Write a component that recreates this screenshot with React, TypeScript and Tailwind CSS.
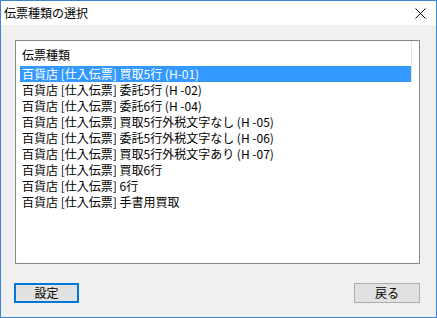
import React from "react";

const rows = [
    "百貨店 [仕入伝票] 買取5行 (H-01)",
    "百貨店 [仕入伝票] 委託5行 (H -02)",
    "百貨店 [仕入伝票] 委託6行 (H -04)",
    "百貨店 [仕入伝票] 買取5行外税文字なし (H -05)",
    "百貨店 [仕入伝票] 委託5行外税文字なし (H -06)",
    "百貨店 [仕入伝票] 買取5行外税文字あり (H -07)",
    "百貨店 [仕入伝票] 買取6行",
    "百貨店 [仕入伝票] 6行",
    "百貨店 [仕入伝票] 手書用買取",
];

export default function App() {
    return (
        <div className="w-[437px] h-[318px] flex flex-col border border-[#3b87d6] bg-[#f0f0f0] text-[12px] text-black font-['Noto_Sans_CJK_JP',sans-serif] overflow-hidden">
            {/* title bar */}
            <div className="h-[24px] shrink-0 flex items-center justify-between bg-white pl-[3px] pr-[10px]">
                <span className="leading-[16px]">伝票種類の選択</span>
                <svg width="11" height="11" viewBox="0 0 11 11" className="mt-[1px]">
                    <path d="M0.5 0.5 L10.5 10.5 M10.5 0.5 L0.5 10.5" stroke="#000" strokeWidth="1" />
                </svg>
            </div>

            {/* list */}
            <div className="mt-[15px] ml-[14px] w-[405px] h-[224px] shrink-0 border border-[#828790] bg-white">
                <div className="flex">
                    <div className="w-[395px] flex flex-col">
                        <div className="h-[25px] pt-[6px] pl-[6px] leading-[16px]">伝票種類</div>
                        {rows.map((r, i) => (
                            <div
                                key={i}
                                className={
                                    i === 0
                                        ? "ml-[4px] h-[16px] pl-[2px] leading-[16px] whitespace-nowrap bg-[#3399ff] text-white"
                                        : "ml-[4px] h-[16px] pl-[2px] leading-[16px] whitespace-nowrap"
                                }
                            >
                                {r}
                            </div>
                        ))}
                    </div>
                    <div className="w-px h-[42px] bg-[#e5e5e5]" />
                </div>
            </div>

            {/* buttons */}
            <div className="mt-[19px] flex justify-between pl-[13px] pr-[16px]">
                <button className="w-[65px] h-[20px] border-2 border-[#0078d7] bg-[#e1e1e1] leading-[14px]">
                    設定
                </button>
                <button className="w-[66px] h-[20px] border border-[#adadad] bg-[#e1e1e1] leading-[16px]">
                    戻る
                </button>
            </div>
        </div>
    );
}
